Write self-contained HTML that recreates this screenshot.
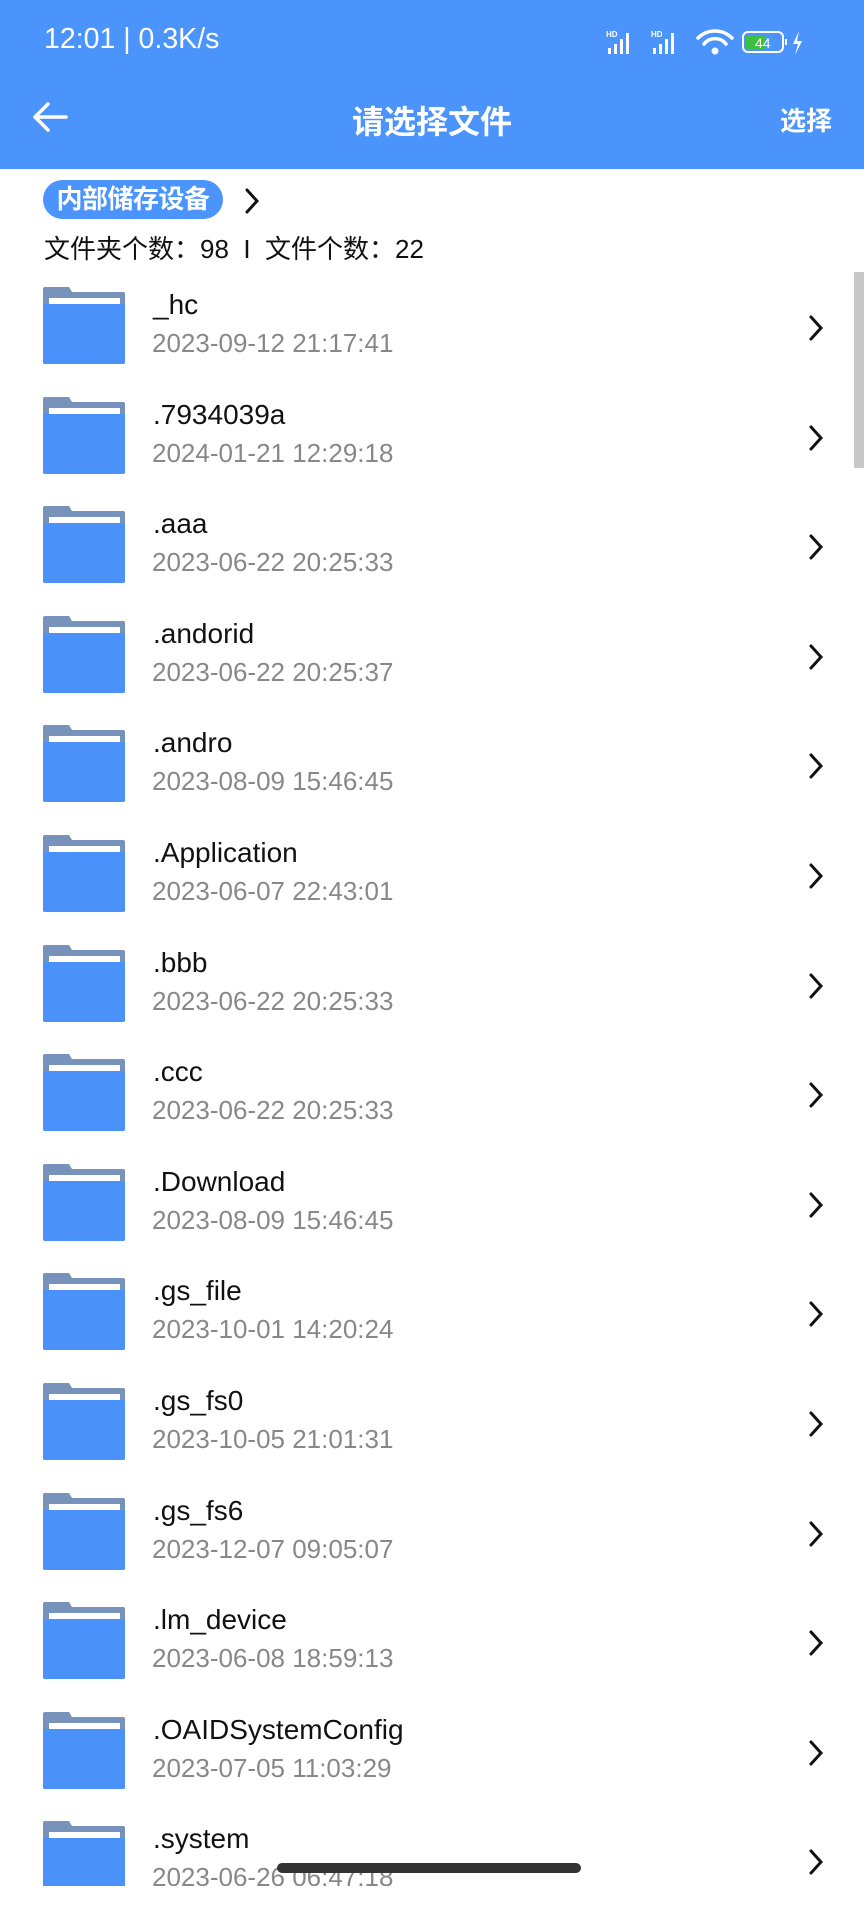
<!DOCTYPE html>
<html><head><meta charset="utf-8"><style>
*{margin:0;padding:0;box-sizing:border-box}
body{width:864px;height:1920px;overflow:hidden;background:#fff;font-family:"Liberation Sans","Noto Sans CJK SC",sans-serif;position:relative}
.hdr{position:absolute;left:0;top:0;width:864px;height:169px;background:#4a94fb;color:#fff}
.st{position:absolute;left:44px;top:23px;font-size:28.5px}
.title{position:absolute;left:0;width:864px;top:97px;text-align:center;font-size:32px;font-weight:bold}
.sel{position:absolute;right:32px;top:101px;font-size:26px;font-weight:bold}
.chip{position:absolute;left:43px;top:180px;width:180px;height:39px;border-radius:20px;background:#4a94fb;color:#fff;font-size:26px;line-height:39px;text-align:center;font-weight:bold;letter-spacing:-0.5px}
.cnt{position:absolute;left:44px;top:229px;font-size:26px;color:#111}
.list{position:absolute;left:0;top:270px;width:864px;height:1616px;overflow:hidden}
.row{position:absolute;left:0;width:864px;height:110px}
.fi{position:absolute;left:43px;top:17px}
.nm{position:absolute;left:153px;top:19px;font-size:28px;color:#111}
.dt{position:absolute;left:152px;top:58px;font-size:26px;color:#888}
.ch{position:absolute;left:806px;top:43px}
.sb{position:absolute;left:854px;top:272px;width:10px;height:196px;background:#c8c8c8}
.home{position:absolute;left:277px;top:1863px;width:304px;height:10px;border-radius:5px;background:#333}
</style></head><body>
<div class="hdr">
<div class="st">12:01 | 0.3K/s</div>
<svg style="position:absolute;left:606px;top:28px" width="220" height="30" viewBox="0 0 220 30">
<g fill="#fff"><text x="0" y="9" font-size="8" font-family="Liberation Sans" font-weight="bold">HD</text>
<rect x="2" y="20" width="3" height="6"/><rect x="8" y="16" width="3" height="10"/><rect x="14" y="11" width="3" height="15"/><rect x="20" y="5" width="3" height="21"/>
<text x="45" y="9" font-size="8" font-family="Liberation Sans" font-weight="bold">HD</text>
<rect x="47" y="20" width="3" height="6"/><rect x="53" y="16" width="3" height="10"/><rect x="59" y="11" width="3" height="15"/><rect x="65" y="5" width="3" height="21"/></g>
<g fill="none" stroke="#fff" stroke-width="3.5" stroke-linecap="round"><path d="M92 10a24 24 0 0 1 34 0"/><path d="M98 16a14 14 0 0 1 22 0"/></g><circle cx="109" cy="23" r="3.5" fill="#fff"/>
<rect x="137" y="4" width="40" height="20" rx="5" fill="none" stroke="#fff" stroke-width="2"/><rect x="140" y="7" width="20" height="14" rx="2" fill="#3fbf3f"/>
<text x="149" y="20" font-size="14" fill="#fff" font-family="Liberation Sans">44</text><rect x="179" y="11" width="2" height="6" fill="#fff"/>
<path d="M193 3l-6 13h5l-3 11 7-14h-5z" fill="#fff"/></svg>
<svg style="position:absolute;left:30px;top:100px" width="40" height="34" viewBox="0 0 40 34"><path d="M36 17H5M18 4L5 17l13 13" fill="none" stroke="#fff" stroke-width="3.5" stroke-linecap="round" stroke-linejoin="round"/></svg>
<div class="title">请选择文件</div>
<div class="sel">选择</div>
</div>
<div class="chip">内部储存设备</div>
<svg style="position:absolute;left:242px;top:187px" width="20" height="28" viewBox="0 0 20 28"><path d="M5 3l10 11L5 25" fill="none" stroke="#111" stroke-width="3" stroke-linecap="round"/></svg>
<div class="cnt">文件夹个数：98 &nbsp;I&nbsp; 文件个数：22</div>
<div class="list">
<div class="row" style="top:0px"><svg class="fi" width="82" height="77" viewBox="0 0 82 77"><path d="M2 0h24l3 5h51a2 2 0 0 1 2 2v68a2 2 0 0 1-2 2H2a2 2 0 0 1-2-2V2a2 2 0 0 1 2-2z" fill="#7793bb"/><rect x="6" y="11" width="71" height="6" fill="#fff"/><path d="M0 17h82v58a2 2 0 0 1-2 2H2a2 2 0 0 1-2-2z" fill="#4a92fa"/></svg><div class="nm">_hc</div><div class="dt">2023-09-12 21:17:41</div><svg class="ch" width="20" height="30" viewBox="0 0 20 30"><path d="M5 4l10 11L5 26" fill="none" stroke="#111" stroke-width="3" stroke-linecap="round"/></svg></div>
</div>
<div class="sb"></div>
<div class="home"></div>
<script>
var d=[["_hc","2023-09-12 21:17:41"],[".7934039a","2024-01-21 12:29:18"],[".aaa","2023-06-22 20:25:33"],[".andorid","2023-06-22 20:25:37"],[".andro","2023-08-09 15:46:45"],[".Application","2023-06-07 22:43:01"],[".bbb","2023-06-22 20:25:33"],[".ccc","2023-06-22 20:25:33"],[".Download","2023-08-09 15:46:45"],[".gs_file","2023-10-01 14:20:24"],[".gs_fs0","2023-10-05 21:01:31"],[".gs_fs6","2023-12-07 09:05:07"],[".lm_device","2023-06-08 18:59:13"],[".OAIDSystemConfig","2023-07-05 11:03:29"],[".system","2023-06-26 06:47:18"]];
var l=document.querySelector('.list'),t=l.innerHTML,h='';
for(var i=0;i<d.length;i++){h+=t.replace('top:0px','top:'+(i*109.6)+'px').replace('>_hc<','>'+d[i][0]+'<').replace('2023-09-12 21:17:41',d[i][1]);}
l.innerHTML=h;
</script>
</body></html>
